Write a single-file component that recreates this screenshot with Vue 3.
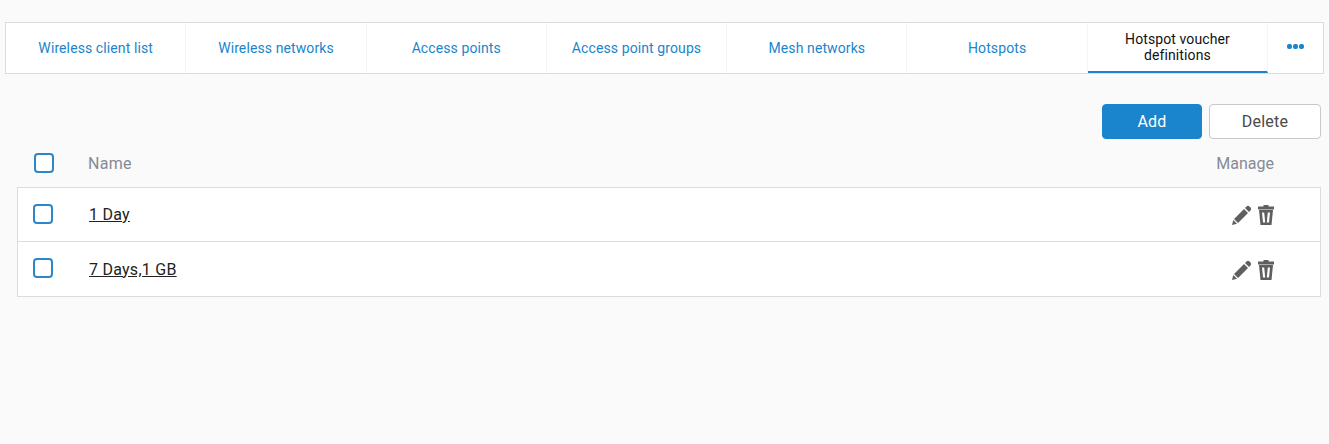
<script setup>
const tabs = ['Wireless client list','Wireless networks','Access points','Access point groups','Mesh networks','Hotspots','Hotspot voucher definitions']
const rows = ['1 Day','7 Days,1 GB']
</script>

<template>
  <div class="page">
    <nav class="tabs">
      <a v-for="(t,i) in tabs" :key="t" class="tab" :class="{active:i===tabs.length-1}">{{ t }}</a>
      <div class="more"><span></span><span></span><span></span></div>
    </nav>
    <div class="actions">
      <button class="btn primary">Add</button>
      <button class="btn">Delete</button>
    </div>
    <div class="head">
      <span class="check"></span>
      <span class="hname">Name</span>
      <span class="hmanage">Manage</span>
    </div>
    <div class="table">
      <div v-for="r in rows" :key="r" class="row">
        <span class="check rowcheck"></span>
        <a class="name">{{ r }}</a>
        <div class="icons">
          <svg width="20" height="20" viewBox="0 0 20 20"><path fill="#5f5f5f" d="M14.5 1.5Q16 0 17.5 1.5L18.5 2.5Q20 4 18.5 5.5L17 7 13 3ZM12 4 16 8 6 18 2 14ZM1.3 15 5 18.7 0 20Z"/></svg>
          <svg width="16" height="20" viewBox="0 0 16 20"><path fill="#5f5f5f" fill-rule="evenodd" d="M5.5 0h5v1.5H16v3H0v-3h5.5ZM1 5h14L13.5 20h-11ZM4 7.5H6.2L7.2 17.5H5ZM12 7.5H9.8L8.8 17.5H11Z"/></svg>
        </div>
      </div>
    </div>
  </div>
</template>

<style scoped>
.page { width:1329px; height:444px; box-sizing:border-box; padding:22px 5px 0 5px; font-family:Roboto,"Liberation Sans",sans-serif; font-size:14px; overflow:hidden; }
.tabs { display:grid; grid-template-columns:repeat(7,180.3px) 1fr; height:52px; box-sizing:border-box; background:#fff; border:1px solid #dcdcdc; }
.tab { display:flex; align-items:center; justify-content:center; text-align:center; box-sizing:border-box; padding:0 20px; color:#1a85cc; border-right:1px solid #f5f5f5; line-height:16px; letter-spacing:.1px; font-size:14px; }
.tab.active { color:#111; border-bottom:2px solid #1a85cc; }
.more { display:flex; align-items:center; justify-content:center; gap:1px; padding-bottom:4px; }
.more span { width:5px; height:5px; border-radius:40%; background:#1a85cc; }
.actions { display:flex; justify-content:flex-end; gap:7px; margin-top:30px; padding-right:3px; }
.btn { width:112px; height:35px; box-sizing:border-box; border:1px solid #c8c8c8; border-radius:4px; background:#fff; color:#4a4a4a; font:inherit; font-size:16px; letter-spacing:.2px; padding:0; }
.btn.primary { width:100px; background:#1a85cc; border-color:#1a85cc; color:#fff; }
.head { display:flex; align-items:center; height:48px; margin-right:3px; padding-left:29px; color:#858b94; font-size:16px; }
.check { width:20px; height:20px; box-sizing:border-box; border:2px solid #2b87c9; border-radius:4px; background:#fff; flex:none; }
.rowcheck { align-self:flex-start; margin-top:16px; }
.hname { margin-left:34px; letter-spacing:.3px; }
.hmanage { margin-left:auto; margin-right:47px; }
.table { margin-left:12px; margin-right:3px; background:#fff; border:1px solid #dcdcdc; }
.row { display:flex; align-items:center; height:53px; padding-left:15px; }
.row + .row { height:54px; border-top:1px solid #dcdcdc; }
.row + .row .icons { margin-top:2px; }
.name { margin-left:36px; color:#222; text-decoration:underline; font-size:16px; letter-spacing:.25px; }
.icons { margin-left:auto; margin-right:46px; display:flex; align-items:center; gap:6px; }
</style>

<style>
html,body { background:#fafafa; margin:0; }
</style>
